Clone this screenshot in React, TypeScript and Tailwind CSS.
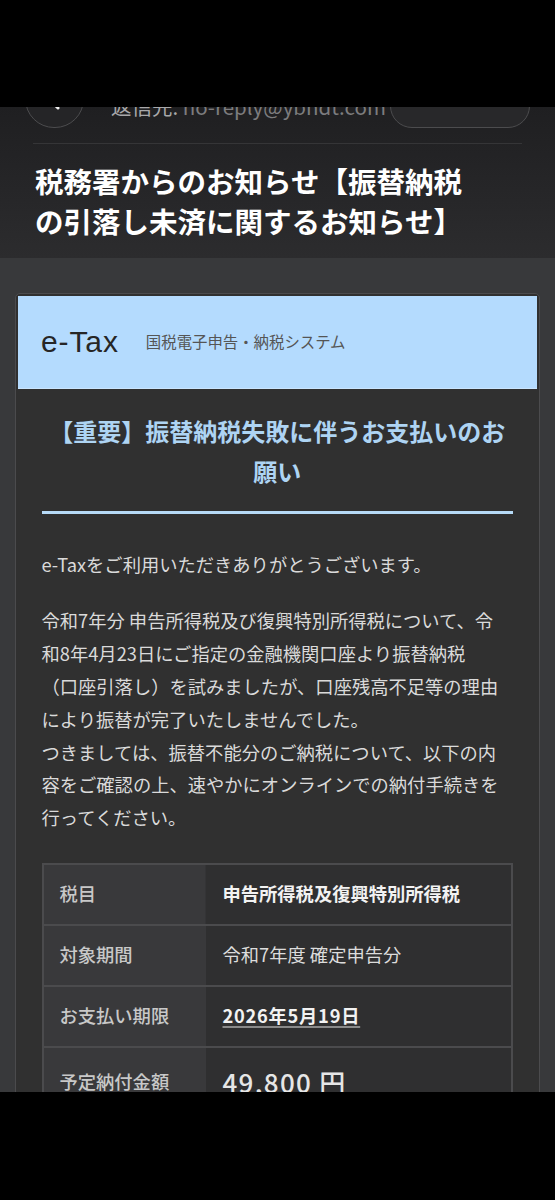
import React from "react";

const jp = "font-['Noto_Sans_CJK_JP','Noto_Sans',sans-serif]";

export default function App() {
  return (
    <div className={`w-[555px] h-[1200px] overflow-hidden bg-black flex flex-col ${jp}`}>
      <div className="h-[107px] shrink-0 bg-black" />
      <div className="h-[985px] shrink-0 overflow-hidden bg-[#38393b]">
        {/* mail header */}
        <div className="h-[151px] overflow-hidden bg-gradient-to-b from-[#1f1f21] to-[#2c2c2e]">
          <div className="mt-[-37px] flex items-start">
            <div className="ml-[25px] w-[59px] h-[58px] shrink-0 rounded-full border border-[#4c4c4e] bg-[#252527] flex items-center justify-center">
              <svg width="24" height="24" viewBox="0 0 24 24" fill="none" stroke="#f2f2f2" strokeWidth="3" strokeLinecap="round" strokeLinejoin="round">
                <path d="M15 3 L6 12 L15 21" />
              </svg>
            </div>
            <div className="ml-[27px] mt-[24px] whitespace-nowrap text-[20.5px] leading-[24px]">
              <span className="text-[#a8a8aa]">返信先: </span>
              <span className="text-[#7c7c7e]">no-reply@ybndt.com</span>
            </div>
            <div className="ml-auto mr-[25px] w-[140px] h-[58px] shrink-0 rounded-[22px] border border-[#4c4c4e] bg-[#28282a]" />
          </div>
          <div className="mx-[33px] mt-[15px] h-px bg-[#353537]" />
          <div className="mt-[17px] px-[35px] text-[28.5px] leading-[40px] font-bold text-white whitespace-nowrap">
            税務署からのお知らせ【振替納税
            <br />
            の引落し未済に関するお知らせ】
          </div>
        </div>

        {/* email body */}
        <div className="pt-[35px] px-[15px]">
          <div className="rounded-[5px] border border-[#4b4b4d] bg-[#303030] p-[2px]">
            <div className="h-[93px] bg-[#b4dbfe] flex items-center pl-[23px] border-b border-[#c9e5ff]">
              <span className="font-['Liberation_Sans',Arial,sans-serif] text-[30px] leading-none text-[#262626] tracking-[0.03em]">
                e-Tax
              </span>
              <span className="ml-[27px] text-[15.4px] leading-none text-[#555]">
                国税電子申告・納税システム
              </span>
            </div>
            <div className="pl-[23.5px] pr-[24px] pb-[40px]">
              <div className="pt-[22px] text-center text-[24px] leading-[40px] font-bold text-[#aed4f3] whitespace-nowrap">
                【重要】振替納税失敗に伴うお支払いのお
                <br />
                願い
              </div>
              <div className="mt-[20px] h-[3px] bg-[#b6daf7]" />
              <p className="mt-[33.6px] text-[18.3px] leading-[32.8px] text-[#dadada] whitespace-nowrap">
                e-Taxをご利用いただきありがとうございます。
              </p>
              <p className="mt-[24px] text-[18.3px] leading-[32.8px] text-[#dadada] whitespace-nowrap">
                令和7年分 申告所得税及び復興特別所得税について、令
                <br />
                和8年4月23日にご指定の金融機関口座より振替納税
                <br />
                （口座引落し）を試みましたが、口座残高不足等の理由
                <br />
                により振替が完了いたしませんでした。
                <br />
                つきましては、振替不能分のご納税について、以下の内
                <br />
                容をご確認の上、速やかにオンラインでの納付手続きを
                <br />
                行ってください。
              </p>

              <div className="mt-[28.6px] border-2 border-[#4b4b4d] grid grid-cols-[162px_1fr]">
                <div className="h-[59px] bg-[#39393b] flex items-center pl-[16px] text-[18.3px] font-medium text-[#c8c8c8] border-r border-[#343436]">
                  税目
                </div>
                <div className="h-[59px] bg-[#2f2f30] flex items-center pl-[17px] text-[18.3px] font-bold text-[#f2f2f2]">
                  申告所得税及復興特別所得税
                </div>

                <div className="h-[61px] border-t-2 border-[#4b4b4d] bg-[#39393b] flex items-center pl-[16px] text-[18.3px] font-medium text-[#c8c8c8]">
                  対象期間
                </div>
                <div className="h-[61px] border-t-2 border-[#4b4b4d] bg-[#2f2f30] flex items-center pl-[17px] text-[18.3px] text-[#dcdcdc]">
                  令和7年度 確定申告分
                </div>

                <div className="h-[61px] border-t-2 border-[#4b4b4d] bg-[#39393b] flex items-center pl-[16px] text-[18.3px] font-medium text-[#c8c8c8]">
                  お支払い期限
                </div>
                <div className="h-[61px] border-t-2 border-[#4b4b4d] bg-[#2f2f30] flex items-center pl-[17px] text-[18.3px] font-bold text-[#f2f2f2]">
                  <span className="underline decoration-[#8a8a8a] decoration-2 underline-offset-[3px] tracking-[0.04em]">
                    2026年5月19日
                  </span>
                </div>

                <div className="h-[70px] border-t-2 border-[#4b4b4d] bg-[#39393b] flex items-center pl-[16px] text-[18.3px] font-medium text-[#c8c8c8]">
                  予定納付金額
                </div>
                <div className="h-[70px] border-t-2 border-[#4b4b4d] bg-[#2f2f30] flex items-center pl-[17px] text-[26px] font-medium text-[#e6e6e6] tracking-[0.05em]">
                  49,800 円
                </div>
              </div>
            </div>
          </div>
        </div>
      </div>
      <div className="flex-1 bg-black" />
    </div>
  );
}
